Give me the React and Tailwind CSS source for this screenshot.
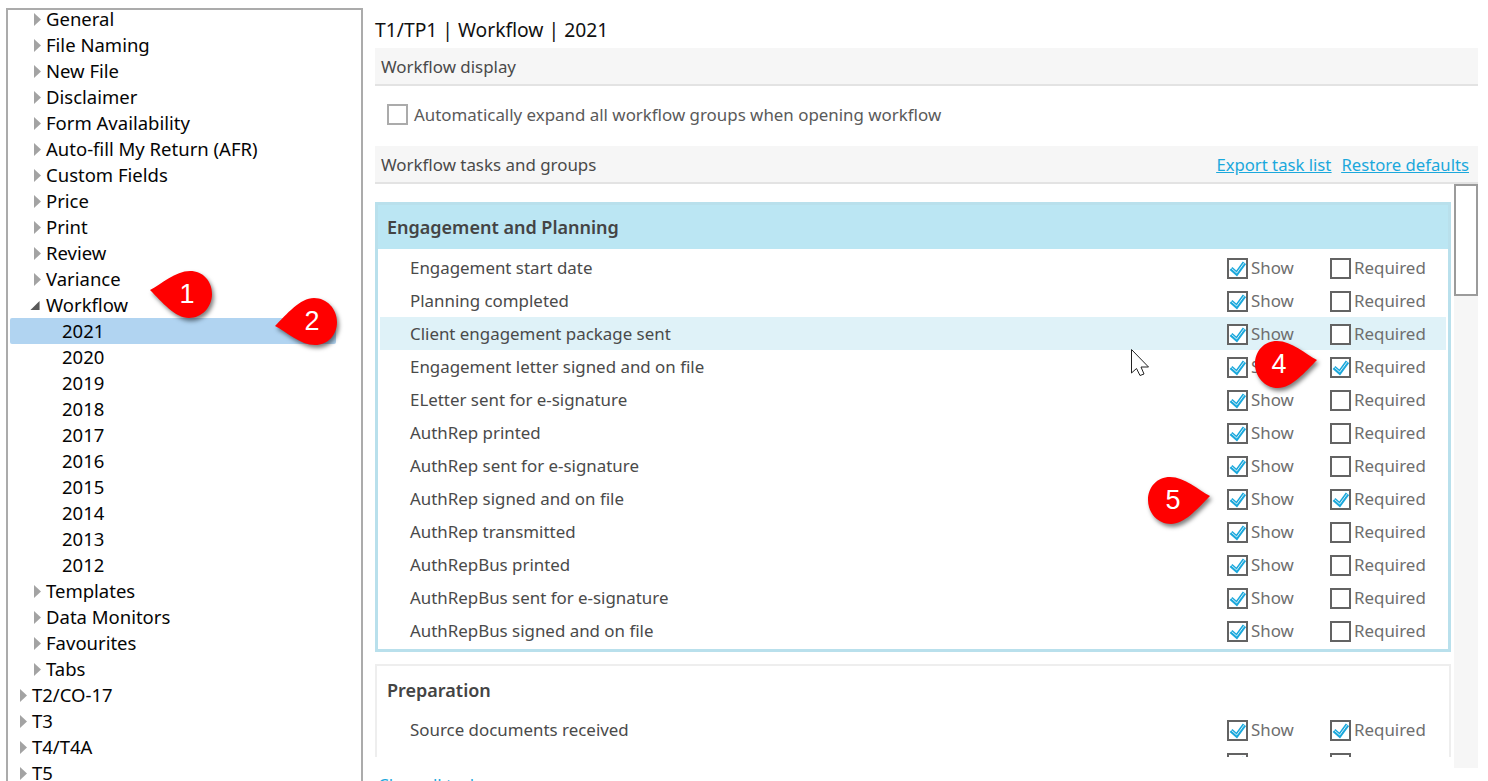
const SANS = '"Noto Sans","Open Sans",sans-serif';

function Tri({ open }) {
  if (open)
    return (
      <svg width="11" height="11" viewBox="0 0 11 11" className="block">
        <path d="M10.5 0.5V10.5H0.5Z" fill="#595959" />
      </svg>
    );
  return (
    <svg width="7" height="13" viewBox="0 0 7 13" className="block">
      <path d="M0 0L7 6.5L0 13Z" fill="#a3a3a3" />
    </svg>
  );
}

function TreeRow({ label, level, open, selected }) {
  const pad = level === 1 ? "pl-[10px]" : level === 2 ? "pl-[24px]" : "pl-[52px]";
  return (
    <div
      className={
        "flex h-[26px] w-[326px] ml-[2px] items-center whitespace-nowrap text-[18.5px] text-[#050505] " +
        pad +
        (selected ? " bg-[#b1d4f1] rounded-[2px]" : "")
      }
    >
      {level < 3 && (
        <span className={open ? "w-[12px] flex justify-end pr-[2px] -ml-[4px] mr-[4px]" : "w-[12px] flex"}>
          <Tri open={open} />
        </span>
      )}
      <span>{label}</span>
    </div>
  );
}

function Box({ checked, light, className = "" }) {
  return (
    <span
      className={
        "block relative h-[21px] w-[21px] shrink-0 border-2 bg-white " +
        (light ? "border-[#ababab] " : "border-[#636363] ") +
        className
      }
    >
      {checked && (
        <svg width="17" height="17" viewBox="0 0 17 17" className="block">
          <path d="M2 8.5L7.7 13.5L15.5 2.8" fill="none" stroke="#1ba8dc" strokeWidth="4.2" />
          <path d="M2.6 8.6L7.7 13L15 3.1" fill="none" stroke="#ffffff" strokeWidth="0.8" />
        </svg>
      )}
    </span>
  );
}

function Task({ label, show = true, req = false, hot }) {
  return (
    <div className={"flex h-[33px] items-center pl-[30px] " + (hot ? "bg-[#dff2f8]" : "")}>
      <span className="flex-1 text-[16.9px] text-[#4a4a4a] whitespace-nowrap">{label}</span>
      <label className="flex w-[103px] items-center gap-[3px] text-[16.9px] text-[#6e6e6e]">
        <Box checked={show} className="translate-y-[1px]" />
        Show
      </label>
      <label className="flex w-[116px] items-center gap-[3px] text-[16.9px] text-[#6e6e6e]">
        <Box checked={req} className="translate-y-[1px]" />
        Required
      </label>
    </div>
  );
}

function Pin({ className, n, flip, mirror, tx }) {
  return (
    <div className={"absolute h-[47px] w-[62px] " + className}>
      <svg
        width="62"
        height="47"
        viewBox="0 0 62 47"
        className="absolute left-0 top-0 overflow-visible drop-shadow-[2px_3px_2px_rgba(0,0,0,0.5)]"
      >
        <g
          transform={
            (mirror ? "translate(62 0) scale(-1 1) " : "") + (flip ? "translate(0 47) scale(1 -1)" : "")
          }
        >
          <path
            d="M0 19C12 13 25 0 40 0C53 0 62 10 62 23C62 36 52 47 39 47C25 47 12 31 0 19Z"
            fill="#ff0000"
          />
        </g>
      </svg>
      <span
        className={
          "absolute top-0 flex h-[47px] w-[30px] items-center justify-center text-[27px] text-white " + tx
        }
        style={{ fontFamily: '"Liberation Sans",sans-serif' }}
      >
        {n}
      </span>
    </div>
  );
}

const tree = [
  ["General", 2], ["File Naming", 2], ["New File", 2], ["Disclaimer", 2], ["Form Availability", 2],
  ["Auto-fill My Return (AFR)", 2], ["Custom Fields", 2], ["Price", 2], ["Print", 2], ["Review", 2],
  ["Variance", 2], ["Workflow", 2, true], ["2021", 3, false, true], ["2020", 3], ["2019", 3], ["2018", 3],
  ["2017", 3], ["2016", 3], ["2015", 3], ["2014", 3], ["2013", 3], ["2012", 3], ["Templates", 2],
  ["Data Monitors", 2], ["Favourites", 2], ["Tabs", 2], ["T2/CO-17", 1], ["T3", 1], ["T4/T4A", 1], ["T5", 1],
];

const tasks = [
  ["Engagement start date"],
  ["Planning completed"],
  ["Client engagement package sent", true, false, true],
  ["Engagement letter signed and on file", true, true],
  ["ELetter sent for e-signature"],
  ["AuthRep printed"],
  ["AuthRep sent for e-signature"],
  ["AuthRep signed and on file", true, true],
  ["AuthRep transmitted"],
  ["AuthRepBus printed"],
  ["AuthRepBus sent for e-signature"],
  ["AuthRepBus signed and on file"],
];

export default function App() {
  return (
    <div
      className="relative flex h-[781px] w-[1488px] gap-[12px] overflow-hidden bg-white pl-[6px] pt-[8px]"
      style={{ fontFamily: SANS }}
    >
      <aside className="h-[800px] w-[357px] shrink-0 overflow-hidden border-2 border-[#ababab]">
        <div className="-mt-[4px]">
          {tree.map(([label, level, open, selected]) => (
            <TreeRow key={label} label={label} level={level} open={open} selected={selected} />
          ))}
        </div>
      </aside>

      <main className="w-[1103px] shrink-0 pt-[4px]">
        <h1 className="flex h-[36px] items-center text-[19.3px] font-normal text-[#111111]">
          T1/TP1 | Workflow | 2021
        </h1>

        <div className="flex h-[38px] items-center border-b-2 border-[#e3e3e3] bg-[#f6f6f6] px-[6px] pt-[1px] text-[16.9px] text-[#4a4a4a]">
          Workflow display
        </div>

        <label className="flex h-[60px] items-center gap-[6px] pb-[3px] pl-[12px] text-[16.9px] text-[#5a5a5a]">
          <Box light />
          Automatically expand all workflow groups when opening workflow
        </label>

        <div className="flex h-[38px] items-center justify-between border-b-2 border-[#e3e3e3] bg-[#f6f6f6] pl-[6px] pr-[9px] pt-[1px] text-[16.9px] text-[#4a4a4a]">
          <span>Workflow tasks and groups</span>
          <span className="flex gap-[10px] text-[16.7px] text-[#1ba8dc] underline">
            <a>Export task list</a>
            <a>Restore defaults</a>
          </span>
        </div>

        <div className="flex items-start gap-[3px]">
          <div className="w-[1076px] shrink-0">
            <div className="h-[573px] overflow-hidden pt-[18px]">
              <section className="border-[3px] border-[#b9e0ec]">
                <div className="flex h-[44px] items-center bg-[#bbe6f3] pl-[9px] pt-[1px] text-[18px] font-semibold text-[#444444]">
                  Engagement and Planning
                </div>
                <div className="px-[2px] py-[2px]">
                  {tasks.map(([label, show, req, hot]) => (
                    <Task key={label} label={label} show={show ?? true} req={req} hot={hot} />
                  ))}
                </div>
              </section>

              <section className="mt-[12px] border-2 border-[#eeeeee]">
                <div className="flex h-[47px] items-center pl-[10px] pt-[1px] text-[18px] font-semibold text-[#444444]">
                  Preparation
                </div>
                <div className="px-[3px]">
                  <Task label="Source documents received" show req />
                  <Task label="PreBook file reviewed" />
                </div>
              </section>
            </div>
            <a className="mt-[15px] block pl-[3px] text-[16.9px] text-[#1ba8dc] underline">Clear all tasks</a>
          </div>

          <div className="h-[584px] w-[24px] shrink-0 bg-[#f6f6f6]">
            <div className="h-[112px] border-2 border-[#9b9b9b] bg-white" />
          </div>
        </div>
      </main>

      <Pin className="left-[150px] top-[271px]" n="1" tx="left-[22px]" />
      <Pin className="left-[275px] top-[298px]" n="2" flip tx="left-[22px]" />
      <Pin className="left-[1255px] top-[341px]" n="4" mirror tx="left-[9px]" />
      <Pin className="left-[1148px] top-[477px]" n="5" mirror tx="left-[10px]" />

      <svg
        width="19"
        height="28"
        viewBox="0 0 19 28"
        className="absolute left-[1131px] top-[349px] overflow-visible"
      >
        <path d="M0.5 0.5V24L5.5 19.5L9 26.5L13 25L10 18H17.5Z" fill="#ffffff" stroke="#222222" strokeWidth="1" />
      </svg>
    </div>
  );
}
